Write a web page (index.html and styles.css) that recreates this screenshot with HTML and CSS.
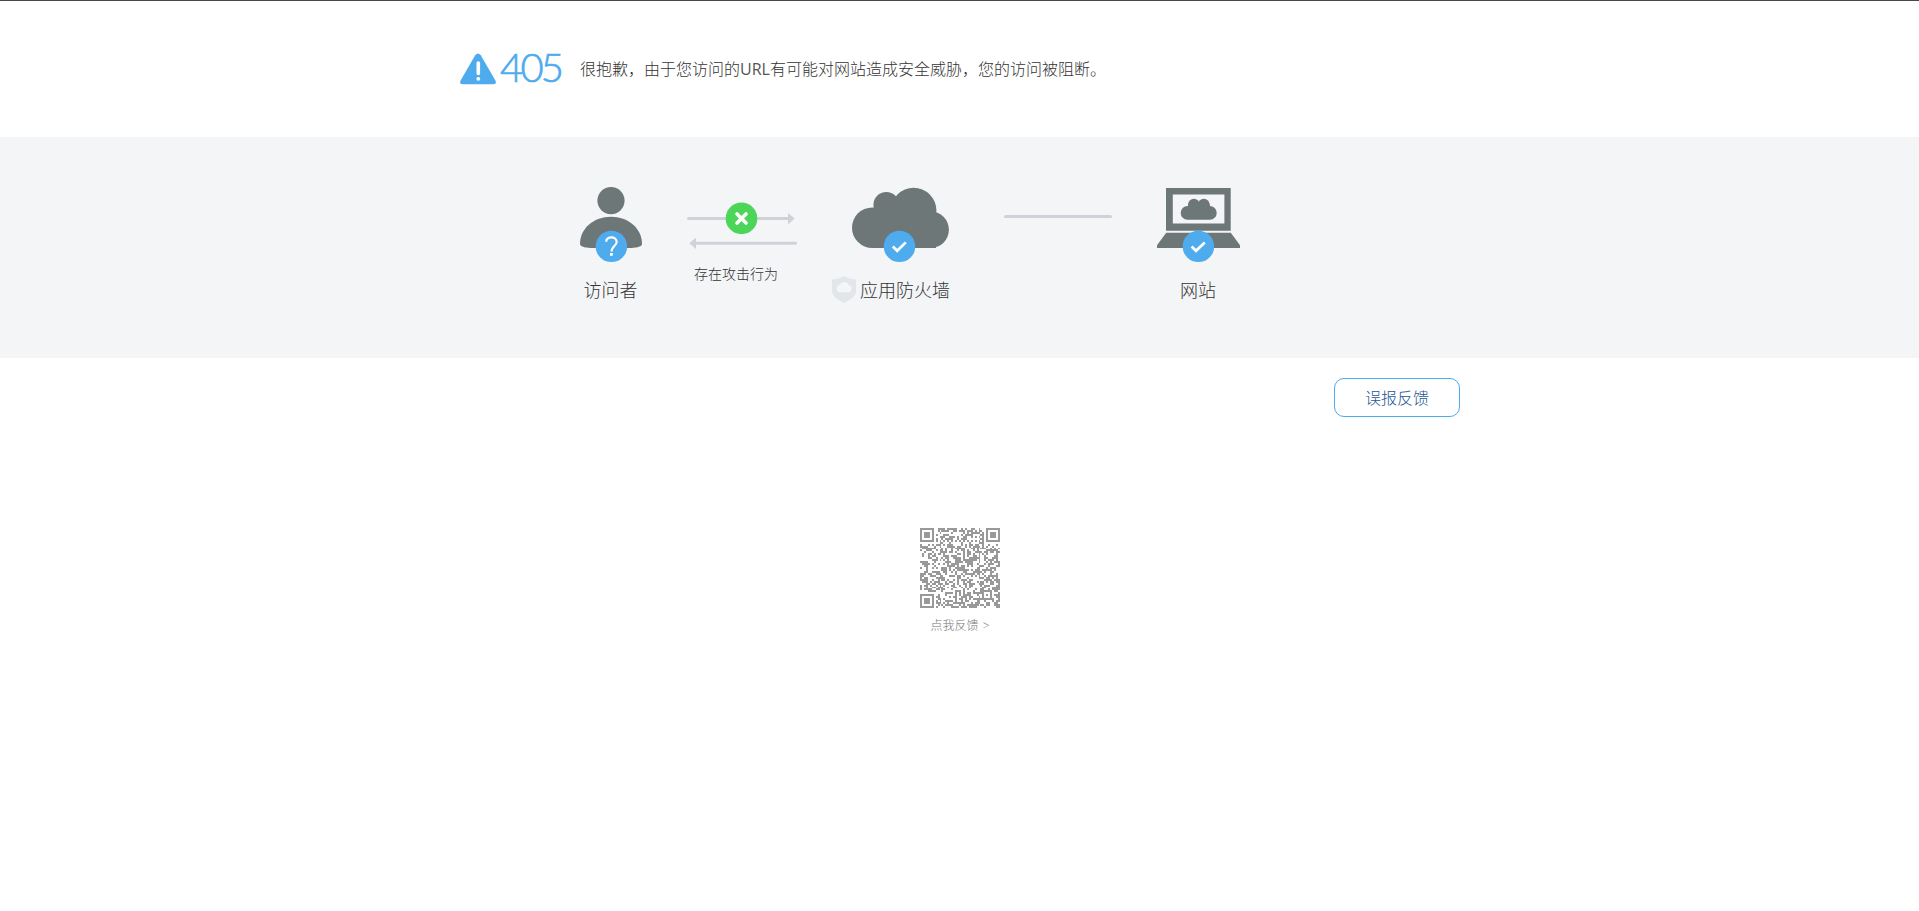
FILE: index.html
```html
<!DOCTYPE html>
<html lang="zh-CN">
<head>
  <meta charset="UTF-8">
  <meta name="viewport" content="width=device-width, initial-scale=1.0">
  <title>405</title>
  <link rel="stylesheet" href="styles.css">
</head>
<body>
  <div class="header">
    <div class="container header-inner">
      <svg class="warn" width="36" height="32" viewBox="0 0 36 32">
        <path d="M15.2 2.2Q18-1.2 20.8 2.2L35.4 27.5Q37 31.3 33.5 31.3H2.5Q-1 31.3.6 27.5Z" fill="#4dabee"/>
        <path d="M18.3 10v10.5" stroke="#fff" stroke-width="3.6" stroke-linecap="round"/>
        <circle cx="18.3" cy="25.8" r="1.9" fill="#fff"/>
      </svg>
      <div class="code">405</div>
      <div class="message">很抱歉，由于您访问的<span class="en">URL</span>有可能对网站造成安全威胁，您的访问被阻断。</div>
    </div>
  </div>

  <div class="main">
    <div class="container flow">
      <div class="node visitor">
        <svg width="62" height="76" viewBox="0 0 62 76">
          <g fill="#6e7777">
            <circle cx="31" cy="13.6" r="13.6"/>
            <path d="M0 57C0 41 14 29.7 31 29.7S62 41 62 57C62 60 55 61 49 61H13C7 61 0 60 0 57Z"/>
          </g>
          <circle cx="31.4" cy="59.4" r="15.7" fill="#4dabee"/>
          <path d="M26.2 54.8C26.2 48.8 36.7 48.8 36.7 55C36.7 58.8 31.4 59.3 31.4 64.4" fill="none" stroke="#fff" stroke-width="2.2"/>
          <rect x="30" y="66" width="2.8" height="2.8" fill="#fff"/>
        </svg>
        <div class="name">访问者</div>
      </div>

      <div class="node attack">
        <svg width="110" height="76" viewBox="0 0 110 76">
          <g stroke="#d0d2d9" stroke-width="3" stroke-linecap="round">
            <path d="M1.5 31.5H102"/>
            <path d="M8 56.3H108.5"/>
          </g>
          <path d="M101 26L107.8 31.6L101 37.4ZM9 50.8L2.2 56.3L9 62Z" fill="#d0d2d9"/>
          <circle cx="54.5" cy="31.4" r="15.8" fill="#4cd558"/>
          <path d="M50 27L59 36M59 27L50 36" stroke="#fff" stroke-width="3.6" stroke-linecap="round"/>
        </svg>
        <div class="tip">存在攻击行为</div>
      </div>

      <div class="node firewall">
        <svg width="98" height="76" viewBox="0 0 98 76">
          <g fill="#6e7777">
            <circle cx="20.3" cy="40.7" r="20.3"/>
            <circle cx="34.3" cy="17.9" r="12.9"/>
            <circle cx="61.6" cy="23.5" r="22.8"/>
            <circle cx="78.6" cy="42.7" r="18.3"/>
            <path d="M20 25L32 12L70 20L84 25V61H20Z"/>
          </g>
          <circle cx="47.5" cy="59.4" r="15.7" fill="#4dabee"/>
          <path d="M40.8 59.5L45.2 63.8L53.8 55.4" fill="none" stroke="#fff" stroke-width="2.7"/>
        </svg>
        <div class="name">
          <svg class="shield" width="24" height="28" viewBox="0 0 24 28">
            <path d="M0 3.5Q7 3.2 12 0Q17 3.2 24 3.5V16Q23 22 12 27Q1 22 0 16Z" fill="#e2e5ea"/>
            <path d="M7.5 16.2A3.8 3.8 0 0 1 7.8 8.8A4.8 4.8 0 0 1 16.7 9A3.7 3.7 0 0 1 16.8 16.2Z" fill="#f3f5f7"/>
          </svg>
          <span>应用防火墙</span>
        </div>
      </div>

      <div class="line"></div>

      <div class="node site">
        <svg width="83" height="76" viewBox="0 0 83 76">
          <g fill="#6e7777">
            <path fill-rule="evenodd" d="M9 1H73.7V43.7H9ZM15.8 7.4V36.6H67.4V7.4Z"/>
            <path d="M9.2 45.7H73.8L83 58.2V61H0V58.2Z"/>
            <rect x="23.7" y="19" width="36" height="13.7" rx="6.8"/>
            <circle cx="36.9" cy="17.6" r="5.9"/>
            <circle cx="46.8" cy="17.6" r="5.9"/>
            <rect x="31" y="17" width="21.7" height="10"/>
          </g>
          <circle cx="41.4" cy="59.4" r="15.7" fill="#4dabee"/>
          <path d="M34.6 59.5L39 63.8L47.8 55.4" fill="none" stroke="#fff" stroke-width="2.7"/>
        </svg>
        <div class="name">网站</div>
      </div>
    </div>
  </div>

  <div class="container feedback">
    <a class="btn">误报反馈</a>
  </div>

  <div class="qr-box">
    <svg id="qr" width="80" height="80" viewBox="0 0 41 41" shape-rendering="crispEdges"></svg>
    <div class="qr-text">点我反馈 &gt;</div>
  </div>

  <script>
    var size = 41;
    var seed = 405;
    var d = '';

    function next() {
      seed = (seed * 1103515245 + 12345) % 2147483648;
      return seed / 2147483648;
    }

    // 同心方块: 定位点和校正点
    function ring(x, y, cx, cy, r) {
      var n = Math.max(Math.abs(x - cx), Math.abs(y - cy));
      if (n > r) {
        return -1;
      }
      return (r == 4 ? n != 2 && n != 4 : n != 1) ? 1 : 0;
    }

    for (var y = 0; y < size; y++) {
      for (var x = 0; x < size; x++) {
        var on = next() < 0.5 ? 1 : 0;
        if (x == 6 || y == 6) {
          on = (x + y) % 2 == 0 ? 1 : 0;
        }
        var marks = [
          ring(x, y, 3, 3, 4),
          ring(x, y, 37, 3, 4),
          ring(x, y, 3, 37, 4),
          ring(x, y, 34, 34, 2)
        ];
        for (var i = 0; i < marks.length; i++) {
          if (marks[i] >= 0) {
            on = marks[i];
          }
        }
        if (on) {
          d += 'M' + x + ' ' + y + 'h1v1h-1z';
        }
      }
    }
    document.querySelector('#qr').innerHTML = '<path fill="#999" d="' + d + '"/>';
  </script>
</body>
</html>
```
FILE: styles.css
```css
* {
  margin: 0;
  padding: 0;
  box-sizing: border-box;
}

body {
  background-color: #fff;
  border-top: 1px solid #484848;
  color: #333;
  font-family: "Open Sans", "Noto Sans CJK SC", sans-serif;
  font-weight: 300;
}
svg {
  display: block;
}

.container {
  width: 1000px;
  margin-left: calc(50% - 499.5px);
}

.header {
  height: 136px;
}
.header-inner {
  display: flex;
  align-items: center;
  height: 136px;
}
.code {
  width: 80px;
  margin-left: 4px;
  padding-bottom: 4px;
  color: #4dabee;
  font-family: Lato, sans-serif;
  font-size: 40px;
  line-height: 48px;
  letter-spacing: -2.8px;
  -webkit-text-stroke: 0.7px #4dabee;
}
.message {
  font-size: 16px;
  line-height: 24px;
}
.en {
  color: #555;
  font-weight: 400;
}

.main {
  height: 221px;
  padding-top: 50px;
  background-color: #f3f5f7;
}
.flow {
  display: flex;
  align-items: flex-start;
  padding-left: 120px;
}
.name {
  height: 28px;
  margin-top: 13px;
  font-size: 18px;
  line-height: 28px;
  text-align: center;
  white-space: nowrap;
}
.visitor .name,
.site .name {
  padding-right: 1px;
}
.attack {
  margin-left: 45px;
}
.tip {
  padding-left: 7px;
  font-size: 14px;
  line-height: 22px;
}
.firewall {
  width: 118px;
  margin-left: 35px;
}
.firewall > svg {
  margin-left: 20px;
}
.firewall .name {
  display: flex;
  align-items: center;
}
.shield {
  margin-right: 4px;
}
.line {
  width: 108px;
  height: 3px;
  margin: 28px 45px 0 54px;
  border-radius: 2px;
  background-color: #d0d2d9;
}

.feedback {
  display: flex;
  justify-content: flex-end;
  padding-top: 20px;
}
.btn {
  width: 126px;
  height: 39px;
  border: 1px solid #4dabee;
  border-radius: 10px;
  color: #1d5590;
  font-size: 16px;
  line-height: 39px;
  text-align: center;
}

.qr-box {
  display: flex;
  flex-flow: column nowrap;
  align-items: center;
  margin-top: 111px;
  padding-left: 1px;
}
.qr-text {
  margin-top: 9px;
  color: #777;
  font-size: 12px;
  line-height: 18px;
  word-spacing: 1px;
}
```
